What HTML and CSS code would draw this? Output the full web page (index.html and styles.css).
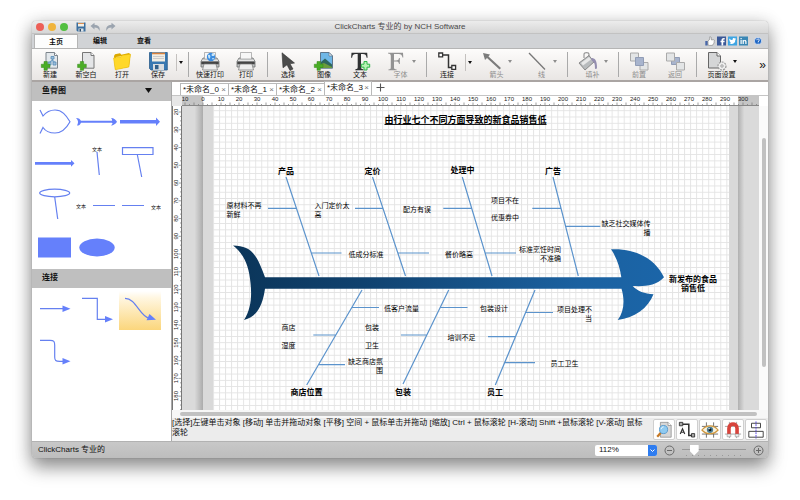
FILE: index.html
```html
<!DOCTYPE html>
<html lang="zh-CN">
<head>
<meta charset="utf-8">
<title>ClickCharts 专业的 by NCH Software</title>
<link rel="stylesheet" href="styles.css">
</head>
<body>
<div class="window">
  <header class="titlebar">
    <div class="title-tools">
      <button class="light red" aria-label="关闭"></button>
      <button class="light yellow" aria-label="最小化"></button>
      <button class="light green" aria-label="缩放"></button>
      <button class="quick" aria-label="保存"><svg width="10" height="10" viewBox="0 0 10 10"><path d="M.5.5h9v9h-8l-1-1z" fill="#3b6f9f"/><path d="M2 .5h6v4H2z" fill="#f4efe6"/><path d="M2 1.5h6" stroke="#d98d50"/><path d="M2.5 6.5h5v3h-5z" fill="#dde3e8"/><path d="M3.5 7h1.5v2.500H3.500z" fill="#2c4a68"/></svg></button>
      <button class="quick" aria-label="撤消"><svg width="11" height="10" viewBox="0 0 11 10"><path d="M.5 4 4.500.8v2C8.500 3 10.500 5.500 9.500 9 8.800 6.500 7 5.500 4.500 5.500v2z" fill="#9ba4af"/></svg></button>
      <button class="quick" aria-label="重做"><svg width="11" height="10" viewBox="0 0 11 10"><path d="M10.500 4 6.500.8v2C2.500 3 .5 5.500 1.500 9 2.200 6.500 4 5.500 6.500 5.500v2z" fill="#9ba4af"/></svg></button>
    </div>
    <h1 class="title">ClickCharts 专业的 by NCH Software</h1>
    <div></div>
  </header>

  <nav class="ribbon">
    <button class="ribbon-tab active">主页</button>
    <button class="ribbon-tab">编辑</button>
    <button class="ribbon-tab">查看</button>
    <div class="social">
      <a href="#" aria-label="赞"><svg width="10" height="10" viewBox="0 0 10 10"><path d="M.3 5h2.400v4.500H.3z" fill="#4867aa"/><path d="M3 5.200 4.800 3V.8c1.400-.3 1.800 1 1.400 3h2.600c1 .3.700 1.500.3 1.700.3.500.1 1.200-.3 1.400 0 .7-.2 1.100-.6 1.300 0 .8-.5 1.200-1.100 1.200H4.200L3 9z" fill="#fff" stroke="#777" stroke-width=".6"/></svg></a>
      <a href="#" aria-label="Facebook"><svg width="9" height="10" viewBox="0 0 9 10"><path d="M0 .5h9v9H0z" fill="#3b5998"/><path d="M4.500 9.500V6.200h-1V4.800h1C4.400 2.500 5.300 1.700 7.700 2v1.400C6.500 3.300 6.100 3.600 6.200 4.800h1.500l-.2 1.400H6.200v3.300z" fill="#fff"/></svg></a>
      <a href="#" aria-label="Twitter"><svg width="9" height="10" viewBox="0 0 9 10"><path d="M0 .5h9v9H0z" fill="#3ea5e3"/><path d="M1.300 2.500c1 1.100 2 1.500 3.200 1.600C4.300 2 6.200 1.600 7 2.600l1-.3-.6.9.7-.1-.8.8C7.400 7.500 4 8.800 1.200 7.300c.8 0 1.500-.1 2-.6-.7-.1-1.200-.5-1.300-1h.6c-.8-.3-1.100-.8-1.100-1.500l.5.100c-.6-.5-.9-1-.6-1.800" fill="#fff"/></svg></a>
      <a href="#" aria-label="LinkedIn"><svg width="9" height="10" viewBox="0 0 9 10"><path d="M0 .5h9v9H0z" fill="#3a87b5"/><path d="M1.500 4h1.200v4H1.500zM1.500 2h1.200v1.200H1.500zM3.600 4h1.200v.6C5.600 3.600 7.500 3.700 7.500 5.600V8H6.300V5.800c0-1-1.500-1-1.500 0V8H3.600z" fill="#fff"/></svg></a>
      <a href="#" class="help" aria-label="帮助"><svg width="8" height="10" viewBox="0 0 8 10"><circle cx="4" cy="5" r="3.600" fill="#1c65c4" stroke="#e9f0fa" stroke-width=".7"/><path d="M2.800 4.200c0-1.700 2.600-1.600 2.500-.1C5.300 5 4.100 5 4.100 6M4.100 6.600v.9" fill="none" stroke="#fff" stroke-width=".9"/></svg></a>
    </div>
  </nav>

  <div class="toolbar">
    <button class="tool"><svg class="icon" viewBox="0 0 24 19"><path d="M8 .5h8.500l3 3v12.700H8z" fill="#e3e8ec" stroke="#7d858c"/><path d="M16.500.5v3h3" fill="#fff" stroke="#7d858c"/><path d="M13 4.500h3v2.500h-3zM10 10h3v3h-3zM15 10h3v3h-3zM14.500 7v1.500M11.500 10l3-2 2 2" fill="#9dbfdb" stroke="#568bb5" stroke-width=".8"/><path class="plus" d="M6 9.500h3.300v2.700H12v3.300H9.300v2.800H6v-2.800H3.300v-3.300H6z"/></svg><span>新建</span></button>
    <button class="tool"><svg class="icon" viewBox="0 0 24 19"><path d="M8.500.5H17l3 3v12.700H8.500z" fill="#e4e5e7" stroke="#777"/><path d="M17 .5v3h3" fill="#fff" stroke="#777"/><path class="plus" d="M6.300 9.500h3.300v2.700h2.700v3.300H9.600v2.800H6.300v-2.800H3.600v-3.300h2.700z"/></svg><span>新空白</span></button>
    <button class="tool"><svg class="icon" viewBox="0 0 24 19"><path d="m4 4 1-1.800 5-1 1.500 1.500L19 1l1.500 1.500L19 15 5 17.500z" fill="#dba900"/><path d="m6 5 12-2 .5 10L5 16z" fill="#fff3a8"/><path d="m3.500 6 7-1 2-1.800 8-1L18.800 15 5.300 17.800z" fill="#ffd829" stroke="#e8b800" stroke-width=".5"/></svg><span>打开</span></button>
    <button class="tool"><svg class="icon" viewBox="0 0 24 19"><path d="M3.500.5h17.800v17.500H5l-1.500-1.500z" fill="#3978b1" stroke="#2b5d8b" stroke-width=".8"/><path d="M6 .8h13v8.700H6z" fill="#f2eee3"/><path d="M6 .8h13v1.500H6z" fill="#d9823d"/><path d="M7 4.500h11M7 6.500h11" stroke="#ccc"/><path d="M7 12h11v6H7z" fill="#d9dde0"/><path d="M9 13h3.500v4.200H9z" fill="#315f89"/></svg><span>保存</span></button>
    <button class="drop split" aria-label="保存选项"><i class="caret"></i></button>
    <span class="sep"></span>
    <button class="tool"><svg class="icon" viewBox="0 0 24 19"><use href="#printer"/><circle cx="13" cy="5" r="4.200" fill="#3c8de0"/><path d="M10 3c2-1 3 1 2 3s-2-1-2-3m5-2c2 1 2 3 0 3s-2-2 0-3m-1 5 2 0-1 2z" fill="#c9e5f7"/></svg><span>快速打印</span></button>
    <button class="tool"><svg class="icon" viewBox="0 0 24 19"><g id="printer"><path d="M5 6h14l2 3.500V15H3V9.500z" fill="#c1c3c4" stroke="#6c6e70" stroke-width=".8"/><path d="M6.500 7V.5h11V7z" fill="#f7f7f7" stroke="#999" stroke-width=".7"/><path d="M3.300 9.500h17.400v2.800H3.300z" fill="#444"/><path d="M6 12h12l1.500 6H4.500z" fill="#ededed" stroke="#777" stroke-width=".7"/><path d="M4 8.300h16" stroke="#eee"/></g></svg><span>打印</span></button>
    <span class="sep"></span>
    <button class="tool"><svg class="icon" viewBox="0 0 24 19"><path d="M6 .8 18.500 11l-4.500.8L17 17l-3 1.500-3-5.700-4 3z" fill="#4c4c4c" stroke="#333" stroke-width=".6"/></svg><span>选择</span></button>
    <button class="tool"><svg class="icon" viewBox="0 0 24 19"><path d="M8.500.5h8.500l3.500 3.500v12.200h-12z" fill="#6fb7e6" stroke="#60768a"/><path d="M17 .5V4h3.500z" fill="#eef3f7" stroke="#60768a" stroke-width=".7"/><path d="m9 10 4-3.500 7 6V16H9z" fill="#2e665d"/><path d="m9 12 3-1 8 4v1H9z" fill="#6b9c3c"/><path class="plus" d="M5 9.500h3.300v2.700H11v3.300H8.300v2.800H5v-2.800H2.300v-3.300H5z"/></svg><span>图像</span></button>
    <button class="tool"><svg class="icon" viewBox="0 0 24 19"><path d="M3.500.7h15.700l.4 5h-1c-.5-2.800-1.300-3.600-3.800-3.600H13v13c0 1.800.5 2.100 2.500 2.300v.8H7.200v-.8c2-.2 2.500-.5 2.500-2.300v-13H7.900c-2.500 0-3.300.8-3.800 3.600h-1z" fill="#303233"/><path d="M16 9.500h3v2.700h2.700v3H19V18h-3v-2.800h-2.700v-3H16z" fill="#b8f3b5" stroke="#2eb447"/></svg><span>文本</span></button>
    <button class="tool menu disabled" disabled><svg class="icon" viewBox="0 0 24 19"><path d="M4 .7h15l.3 4.800h-.8c-.5-2.600-1.500-3.600-4-3.600H10v6.500h2c2 0 2.700-.5 3-2.400h.8v6H15c-.3-1.900-1-2.500-3-2.500h-2v5.700c0 1.800.6 2.100 2.600 2.300v.8H4.400v-.8c2-.2 2.400-.5 2.400-2.300v-11c0-1.800-.6-2.400-2.800-2.600z" fill="#929292"/></svg><i class="caret"></i><span>字体</span></button>
    <span class="sep"></span>
    <button class="tool"><svg class="icon" viewBox="0 0 24 19"><path d="M7 3h6.500v12.500H17" fill="none" stroke="#333" stroke-width="1.500"/><path d="M3.800 1h3.800v3.800H3.800zM16.800 13.500h3.800v3.800h-3.800z" fill="#fff" stroke="#333" stroke-width="1.300"/></svg><span>连接</span></button>
    <button class="drop split" aria-label="连接选项"><i class="caret"></i></button>
    <button class="tool menu disabled" disabled><svg class="icon" viewBox="0 0 24 19"><path d="m3 1 7 1.500L8.500 4.500 21 16l-1.500 1.500L7 6 5 8z" fill="#7c7c7c"/></svg><i class="caret"></i><span>箭头</span></button>
    <button class="tool menu disabled" disabled><svg class="icon" viewBox="0 0 24 19"><path d="m4 1 16 16.500" stroke="#777" stroke-width="1.300"/></svg><i class="caret"></i><span>线</span></button>
    <span class="sep"></span>
    <button class="tool menu disabled" disabled><svg class="icon" viewBox="0 0 24 19"><path d="M8 6V2.500c0-2.500 5-2.500 5 0V8" fill="none" stroke="#999" stroke-width="1.200"/><path d="m3 11 10-7.500L18 10 9 18z" fill="#b8bbbd" stroke="#777" stroke-width=".8"/><path d="m5 11 8-6 2 2.500-8 6z" fill="#e8e8e8"/><path d="M15 6c4 0 6 2 6 10.500l-2 .5c0-5-.5-7-3-8z" fill="#948eaf"/></svg><i class="caret"></i><span>填补</span></button>
    <span class="sep"></span>
    <button class="tool disabled" disabled><svg class="icon" viewBox="0 0 24 19"><path d="M3.500 1h8v8h-8zM13 10.500h8v7.500h-8z" fill="#e3e5e6" stroke="#aaa"/><path d="M8.500 5.500h8v8h-8z" fill="#a8b4cd" stroke="#919db6"/></svg><span>前置</span></button>
    <button class="tool disabled" disabled><svg class="icon" viewBox="0 0 24 19"><path d="M8.500 5.500h8v7h-8z" fill="#a8b4cd" stroke="#919db6"/><path d="M3.500 1h8v8h-8zM13.500 10.500h8v7.500h-8z" fill="#e3e5e6" stroke="#aaa"/></svg><span>返回</span></button>
    <span class="sep"></span>
    <button class="tool menu"><svg class="icon" viewBox="0 0 24 19"><path d="M3.500.5H12l3.500 3.500v12h-12z" fill="#d5d6d7" stroke="#666"/><path d="M12 .5V4h3.500" fill="#fff" stroke="#666"/><circle cx="17" cy="14" r="4" fill="#eee" stroke="#999" stroke-width="1.200" stroke-dasharray="2 1"/><circle cx="17" cy="14" r="1.200" fill="#fff" stroke="#888" stroke-width=".8"/></svg><i class="caret"></i><span>页面设置</span></button>
    <button class="more" aria-label="更多">»</button>
  </div>

  <div class="workspace">
    <aside class="sidebar">
      <button class="side-head">鱼骨图 <i class="caret big"></i></button>
      <div class="palette shapes">
        <button class="shape" aria-label="鱼头"><svg viewBox="0 0 42 42"><path class="ln" d="M7 9l3 6C14 10 18 9 22 9c7 0 11 5 15 11.700C33 28 29 32 22 32c-5 0-9-1-12-5.500l-3 6"/></svg></button>
        <button class="shape" aria-label="鱼骨"><svg viewBox="0 0 42 42"><path class="fl" d="M4 19.700h32v2H4zM0 17c3 0 4 1 5.500 3.700C4 24 3 24.500 1 24.500c1.500-3 1.500-5-1-7.500M35 17c3 0 5 2 6 3.700-1 2-4 4-6 3.800 1-1 1.500-1.800 1.500-2.300L34 20.700l2-.7c.3-1 0-2-1-3"/></svg></button>
        <button class="shape" aria-label="粗箭头"><svg viewBox="0 0 42 42"><path class="fl" d="M1 19h36v-2.500l4 4.200-4 4.300v-2.500H1z"/></svg></button>
        <button class="shape" aria-label="箭头"><svg viewBox="0 0 42 42"><path class="fl" d="M2 19h36v-2l3.500 3.300L38 23.700v-2H2z"/></svg></button>
        <button class="shape" aria-label="上方文本线"><svg viewBox="0 0 42 42"><text x="21" y="8" text-anchor="middle">文本</text><path class="ln" d="m21 9 2.300 23"/></svg></button>
        <button class="shape" aria-label="矩形线"><svg viewBox="0 0 42 42"><path class="ln" d="M3.500 4.700H34v6.800H3.500zM18.300 11.500 22.700 34"/></svg></button>
        <button class="shape" aria-label="椭圆线"><svg viewBox="0 0 42 42"><ellipse class="ln" cx="21.700" cy="8" rx="15" ry="3.800"/><path class="ln" d="m21.700 12 3 22"/></svg></button>
        <button class="shape" aria-label="左侧文本线"><svg viewBox="0 0 42 42"><text x="0" y="23">文本</text><path class="ln" d="M17 20.500h22"/></svg></button>
        <button class="shape" aria-label="右侧文本线"><svg viewBox="0 0 42 42"><path class="ln" d="M3 20.500h22"/><text x="32" y="24">文本</text></svg></button>
        <button class="shape" aria-label="矩形"><svg viewBox="0 0 42 42"><path class="fl" d="M5 10.500h33v20H5z"/></svg></button>
        <button class="shape" aria-label="椭圆"><svg viewBox="0 0 42 42"><ellipse class="fl" cx="21" cy="20.500" rx="17.700" ry="9"/></svg></button>
      </div>
      <h2 class="side-head">连接</h2>
      <div class="palette">
        <button class="shape" aria-label="直线连接"><svg viewBox="0 0 42 42"><path class="ln" d="M7 20.700h24"/><path class="fl" d="m29.500 17.500 8 3.200-8 3.300z"/></svg></button>
        <button class="shape" aria-label="折线连接"><svg viewBox="0 0 42 42"><path class="ln" d="M6 10.300h15.300v21H31"/><path class="fl" d="m29 28 8 3.300-8 3.200z"/></svg></button>
        <button class="shape selected" aria-label="曲线连接"><svg viewBox="0 0 42 42"><path class="ln" d="M6 10.300c11 0 14 17 24 20"/><path class="fl" d="m30.500 26 6.500 5.700-9.500.5z"/></svg></button>
        <button class="shape" aria-label="圆角连接"><svg viewBox="0 0 42 42"><path class="ln" d="M7 10.300h10c4 0 4.700 1 4.700 5V27c0 3.500 1 4.300 5 4.300H31"/><path class="fl" d="m29.500 28 8 3.300-8 3.200z"/></svg></button>
      </div>
    </aside>

    <main class="editor">
      <div class="doc-tabs">
        <button class="doc-tab">*未命名_0<b>×</b></button>
        <button class="doc-tab">*未命名_1<b>×</b></button>
        <button class="doc-tab">*未命名_2<b>×</b></button>
        <button class="doc-tab active">*未命名_3<b>×</b></button>
        <button class="doc-add" aria-label="新标签"><svg width="9" height="9" viewBox="0 0 9 9"><path d="M4.500.5v8M.5 4.500h8" stroke="#555" stroke-width="1.100"/></svg></button>
      </div>
      <div class="stage">
        <div class="corner"></div>
        <svg class="ruler-x" id="ruler-x" height="10"></svg>
        <div class="track-top"></div>
        <svg class="ruler-y" id="ruler-y" width="10"></svg>
        <div class="canvas">
          <svg class="diagram" width="577" height="304" viewBox="182 106 577 304">
            <defs>
              <pattern id="grid" x="213" y="104" width="6.040" height="6.270" patternUnits="userSpaceOnUse"><path d="M.5 0v6.270M0 .5h6.040" stroke="#e3e3e3" stroke-width=".9"/></pattern>
              <linearGradient id="shadowL"><stop offset=".6" stop-color="#dadada"/><stop offset="1" stop-color="#ababab"/></linearGradient>
              <linearGradient id="shadowR"><stop offset="0" stop-color="#b0b0b0"/><stop offset=".3" stop-color="#dadada"/></linearGradient>
              <linearGradient id="bone"><stop offset="0" stop-color="#0b3559"/><stop offset=".3" stop-color="#10426f"/><stop offset=".8" stop-color="#1b61a0"/><stop offset="1" stop-color="#1b65a8"/></linearGradient>
            </defs>
            <path d="M182 106h21v304h-21z" fill="url(#shadowL)"/>
            <path d="M203 106h10v304h-10zM729 106h9v304h-9z" fill="#d9d9d9"/>
            <path d="M738 106h21v304h-21z" fill="url(#shadowR)"/>
            <path d="M213 106h516v304H213z" fill="#fff"/>
            <path d="M213 106h516v304H213z" fill="url(#grid)"/>
            <path class="bones" d="M286 177l33 99M372.500 177l33 99M462.300 177l29.700 99M553 177l25.300 99M362 290l-55.300 95M448.700 290 403 384M535 290l-39.700 95M268 208.300h29M355 208.300h28M443.300 208.300H472M532.300 208.300H561M565.300 226.300h35M311.500 253h30M398 253h31M485 253h31M351.500 307.500H379M440 307.500h27.500M525 312.500h28M313.300 335h22.400M401 335h26M488 336.700h28M505 362.700h30M318.500 364.700H345"/>
            <path d="M233 245.500C250 246 256 252 265 277.300H621.300C620 268 617 258 611 249.300 634 248 655 258 664 277.300 656 286 645 286.500 632.700 286 637 291 645 294 653.500 294.300 648 308 635 318 617.700 320 624 312 625 300 621.500 288.700H265C263 303 258 317 244 320 251 309 252 296 250.500 283 249 265 243 253 233 245.500z" fill="url(#bone)"/>
            <g class="title-text"><text x="465.500" y="123">由行业七个不同方面导致的新食品销售低</text></g>
            <g class="heads">
              <text x="286" y="174">产品</text><text x="372.500" y="174">定价</text><text x="462.500" y="173">处理中</text><text x="553" y="174">广告</text>
              <text x="306.500" y="394.500">商店位置</text><text x="403" y="394.500">包装</text><text x="495" y="394.500">员工</text>
              <text x="693" y="281.500">新发布的食品<tspan x="693" dy="9">销售低</tspan></text>
            </g>
            <g class="notes">
              <text x="226.500" y="207.500">原材料不再<tspan x="226.500" dy="9">新鲜</tspan></text>
              <text x="314.500" y="207.500">入门定价太<tspan x="314.500" dy="9">高</tspan></text>
              <text x="403" y="211.500">配方有误</text>
              <text x="491" y="202.500">项目不在<tspan x="491" dy="17">优惠券中</tspan></text>
              <text x="348.500" y="256.500">低成分标准</text><text x="445" y="256.500">餐价略高</text>
              <text x="384" y="310.500">低客户流量</text><text x="480" y="310.500">包装设计</text>
              <text x="281.500" y="329.500">商店<tspan x="281.500" dy="18">湿度</tspan></text>
              <text x="365" y="329.500">包装<tspan x="365" dy="18">卫生</tspan></text>
              <text x="447.500" y="340">培训不足</text><text x="550.500" y="366">员工卫生</text>
            </g>
            <g class="notes end">
              <text x="650.500" y="225.500">缺乏社交媒体传<tspan x="650.500" dy="9">播</tspan></text>
              <text x="561" y="252">标准烹饪时间<tspan x="561" dy="9">不准确</tspan></text>
              <text x="592" y="311.500">项目处理不<tspan x="592" dy="9">当</tspan></text>
              <text x="383" y="363.500">缺乏商店氛<tspan x="383" dy="9">围</tspan></text>
            </g>
          </svg>
        </div>
        <div class="track-y"><div class="thumb-y"></div></div>
        <div class="track-x"><div class="thumb-x"></div></div>
      </div>
      <div class="hint-bar">
        <p class="hint">[选择]左键单击对象 [移动] 单击并拖动对象 [平移] 空间 + 鼠标单击并拖动 [缩放] Ctrl + 鼠标滚轮 [H-滚动] Shift +鼠标滚轮 [V-滚动] 鼠标滚轮</p>
        <div class="view-tools">
          <button aria-label="预览"><svg viewBox="0 0 20 20"><path d="M6 1.500h8.500L18 5v13H6z" fill="#d6d6d6" stroke="#888" stroke-width=".8"/><path d="M14.500 1.500V5H18" fill="#fff" stroke="#888" stroke-width=".8"/><path d="m6.500 13-4 4.500" stroke="#c57825" stroke-width="2.500"/><circle cx="9.500" cy="9.500" r="4.500" fill="#8fcaf0" stroke="#5296cb"/><path d="M7 9c0-1.500 1-2.300 2.500-2.500" stroke="#fff" fill="none"/></svg></button>
          <button aria-label="自动连接"><svg viewBox="0 0 20 20"><path d="M4 3.500h8V16h3.500" fill="none" stroke="#333" stroke-width="1.700"/><path d="M1.500 1.500h3.800v3.800H1.500zM15 14h3.500v3.800H15z" fill="#aaa" stroke="#333"/><path d="m2.500 14.500 2.500-6 2.500 6M3.500 12.500h3" fill="none" stroke="#333" stroke-width="1.300"/></svg></button>
          <button aria-label="显示网格"><svg viewBox="0 0 20 20"><path d="M6 1.500v17M14 1.500v17M1 6h18M1 14.500h18" stroke="#666"/><path d="M1 10c5-6 13-6 18 0-5 5.500-13 5.500-18 0z" fill="#f8f2df" stroke="#cf963b" stroke-width="1.300"/><circle cx="10" cy="9.800" r="3.500" fill="#4c7f94"/><circle cx="10" cy="9.800" r="1.600" fill="#111"/><circle cx="9" cy="8.500" r=".8" fill="#fff"/></svg></button>
          <button aria-label="对齐网格"><svg viewBox="0 0 20 20"><path d="M1 6h18M1 14.500h18M6 1v18M14 1v18" stroke="#888" stroke-width=".8"/><path d="M5.500 14.500V8c0-6 9-6 9 0v6.500" fill="none" stroke="#d8443c" stroke-width="4"/><path d="M3.500 14.500h4v3h-4zM12.500 14.500h4v3h-4z" fill="#eee" stroke="#888" stroke-width=".6"/></svg></button>
          <button aria-label="对齐参考线"><svg viewBox="0 0 20 20"><path d="M5 2.500h10v5H5zM2 11.500h16V18H2z" fill="#fff" stroke="#333"/><path d="M10 .5v19" stroke="#4b37e0" stroke-dasharray="2 1"/></svg></button>
        </div>
      </div>
    </main>
  </div>

  <footer class="statusbar">
    <span class="status-name">ClickCharts 专业的</span>
    <div class="zoom">
      <label class="zoom-select"><select aria-label="缩放比例"><option>112%</option></select><svg viewBox="0 0 9 11"><path d="m2.500 4.500 2 2 2-2" fill="none" stroke="#fff"/></svg></label>
      <button class="round" aria-label="缩小"><svg viewBox="0 0 11 11"><circle cx="5.500" cy="5.500" r="4.500"/><path d="M3 5.500h5"/></svg></button>
      <input class="slider" type="range" min="0" max="100" value="14" aria-label="缩放">
      <button class="round" aria-label="放大"><svg viewBox="0 0 11 11"><circle cx="5.500" cy="5.500" r="4.500"/><path d="M3 5.500h5M5.500 3v5"/></svg></button>
    </div>
  </footer>
</div>
<script src="rulers.js"></script>
</body>
</html>
```

FILE: styles.css
```css
* { box-sizing: border-box; }

body {
  margin: 0;
  min-height: 100vh;
  display: flex;
  background: #fff;
  color: #111;
  font: 8px/10px "Liberation Sans", "Noto Sans CJK SC", sans-serif;
}

button, select, input { font: inherit; color: inherit; margin: 0; }
button { padding: 0; border: 0; background: none; }
h1, h2, p { margin: 0; font: inherit; }
svg { display: block; }

.window {
  flex: 1;
  min-width: 0;
  margin: 21px 32px 42px;
  display: flex;
  flex-direction: column;
  border-radius: 4px;
  overflow: hidden;
  background: #ececec;
  box-shadow: 0 10px 18px rgba(0, 0, 0, .36), 0 2px 18px rgba(0, 0, 0, .2), 0 0 1px rgba(0, 0, 0, .4);
}

/* Title bar */
.titlebar {
  height: 13px;
  display: grid;
  grid-template-columns: 1fr auto 1fr;
  align-items: center;
  background: linear-gradient(#ececec, #d6d6d6);
  border-bottom: 1px solid #c2c2c2;
}
.title-tools { display: flex; align-items: center; gap: 4px; padding-left: 4px; }
.light { width: 8px; height: 8px; border-radius: 50%; }
.red { background: #ed5f57; }
.yellow { background: #f0b43c; }
.green { background: #52bf40; }
.light + .quick { margin-left: 4px; }
.title { color: #484848; }

/* Ribbon */
.ribbon {
  height: 15px;
  display: flex;
  align-items: flex-end;
  padding-left: 2px;
  background: #d1d3d6;
  border-bottom: 1px solid #b5b5b5;
}
.ribbon-tab { width: 44px; height: 14px; font-size: 7px; font-weight: bold; }
.ribbon-tab.active { background: #fdfdfd; border: 1px solid #b5b5b5; border-bottom: 0; }
.social { display: flex; gap: 2px; margin: 0 6px 2px auto; }
.social .help { margin-left: 4px; }

/* Toolbar */
.toolbar {
  height: 33px;
  display: flex;
  align-items: stretch;
  background: linear-gradient(#fdfcfb, #e9e6e4);
  border-bottom: 2px solid #aaa5a3;
}
.tool {
  width: 36px;
  flex: none;
  display: grid;
  grid-template-columns: 36px;
  grid-template-rows: 19px 8px;
  align-content: start;
  justify-items: center;
  padding-top: 3px;
  font-size: 7px;
  line-height: 8px;
}
.tool.menu { width: 45px; grid-template-columns: 36px 9px; }
.tool.menu span { grid-column: 1 / 3; }
.tool.menu .caret { align-self: center; margin-right: 9px; }
.tool.disabled { color: #8d8d8d; }
.tool span { white-space: nowrap; }
.icon { width: 24px; height: 19px; }
.plus { fill: #4aad25; stroke: #308615; stroke-width: .5; }
.caret {
  width: 4px;
  height: 3px;
  background: currentColor;
  clip-path: polygon(0 0, 100% 0, 50% 100%);
}
.caret.big { width: 7px; height: 5px; }
.drop { width: 9px; flex: none; display: grid; place-items: center; }
.split { height: 17px; margin-top: 5px; border-left: 1px solid #c4c1bf; }
.sep { width: 6px; flex: none; margin: 3px 0; background: linear-gradient(#aaa, #aaa) center / 1px 100% no-repeat; }
.sep:first-of-type { width: 7px; }
.more { margin: 0 2px 0 auto; font-size: 12px; }

/* Workspace */
.workspace { flex: 1; min-height: 0; display: flex; }
.sidebar {
  width: 140px;
  flex: none;
  background: #fff;
  border-right: 1px solid #a9a9a9;
}
.side-head {
  width: 100%;
  height: 19px;
  display: flex;
  align-items: center;
  justify-content: space-between;
  padding: 0 19px 2px 10px;
  background: #bfbfbf;
  font-weight: bold;
}
.palette { display: grid; grid-template-columns: repeat(3, 42px); column-gap: 1px; padding-left: 1px; }
.shape { height: 42px; }
.shape svg { width: 42px; height: 42px; }
.shape.selected { background: linear-gradient(#fff 3px, #fff6e0 10px, #fbd67c); }
.shape text { font-size: 5px; fill: #111; }
.ln { fill: none; stroke: #6580f0; stroke-width: 1.2; }
.fl { fill: #6580fb; }

/* Editor */
.editor { flex: 1; min-width: 0; display: flex; flex-direction: column; }
.doc-tabs {
  height: 14px;
  flex: none;
  display: flex;
  align-items: flex-end;
  padding-left: 8px;
  background: #fff;
  border-bottom: 1px solid #c5c5c5;
}
.doc-tab {
  width: 48px;
  height: 12px;
  display: flex;
  justify-content: space-between;
  align-items: center;
  padding: 0 2px;
  border: 1px solid #b9b9b9;
  border-width: 1px 0 0 1px;
  white-space: nowrap;
}
.doc-tab b { font-weight: normal; color: #777; }
.doc-tab.active { height: 14px; padding-bottom: 2px; border-right-width: 1px; background: #fff; }
.doc-add { padding: 0 4px 3px; }

.stage {
  flex: 1;
  min-height: 0;
  display: grid;
  grid-template-columns: 10px minmax(0, 1fr) 9px;
  grid-template-rows: 10px minmax(0, 1fr) 8px;
}
.corner { background: #e7e7e7; }
.ruler-x { width: 100%; background: #fff; border-bottom: 1px solid #888; }
.ruler-y { height: 100%; background: #fff; border-right: 1px solid #777; border-left: 1px solid #777; }
.ruler-x text, .ruler-y text { font-size: 6px; fill: #222; text-anchor: middle; }
.ruler-x path, .ruler-y path { stroke: #777; stroke-width: .7; }
.ruler-x .outside { fill: #c5c5c5; }
.track-top { background: #fff; }
.canvas { overflow: hidden; background: #dadada; }
.track-y { padding: 32px 2px 43px 3px; background: #fafafa; }
.thumb-y { height: 100%; border-radius: 2px; background: #c1c1c1; }
.track-x { grid-column: 1 / 4; padding: 2px 11px 2px 8px; background: #f7f7f7; }
.thumb-x { height: 4px; border-radius: 2px; background: #c1c1c1; }

.bones { fill: none; stroke: #5b93cc; stroke-width: 1.2; }
.title-text, .heads { font-size: 8px; font-weight: bold; text-anchor: middle; }
.title-text { font-size: 9px; text-decoration: underline; }
.notes { font-size: 7px; }
.notes.end { text-anchor: end; }

.hint-bar { height: 23px; flex: none; display: flex; justify-content: space-between; background: #ececec; }
.hint { flex: 0 1 474px; }
.view-tools { display: flex; gap: 1px; padding: 1px 1px 1px 0; }
.view-tools button { width: 22px; padding: 0 1px; background: #fff; border: 1px solid #cfcfcf; border-radius: 2px; }

/* Status bar */
.statusbar {
  height: 17px;
  flex: none;
  display: flex;
  justify-content: space-between;
  align-items: center;
  padding: 0 4px 0 6px;
  background: linear-gradient(#c8c8c8, #bdbdbd);
  border-top: 1px solid #b2b2b2;
}
.zoom { display: flex; align-items: center; gap: 7px; }
.zoom-select { display: grid; grid-template-columns: 53px 9px; height: 11px; }
.zoom-select > * { grid-row: 1; }
.zoom-select select {
  grid-column: 1 / 3;
  appearance: none;
  padding: 0 4px;
  border: 0;
  border-radius: 2px;
  background: #fff;
}
.zoom-select svg { grid-column: 2; z-index: 1; background: #2f7df0; border-radius: 0 2px 2px 0; pointer-events: none; }
.round svg { width: 11px; height: 11px; fill: none; stroke: #6a6a6a; }
.slider {
  appearance: none;
  width: 64px;
  height: 12px;
  background:
    linear-gradient(#999, #999) 0 5px / 100% 1px no-repeat,
    repeating-linear-gradient(90deg, #999 0 1px, transparent 1px 6px) 4px 11px / 58px 1px no-repeat;
}
.slider::-webkit-slider-thumb {
  appearance: none;
  width: 9px;
  height: 11px;
  background: #fff;
  clip-path: polygon(10% 0, 90% 0, 100% 10%, 100% 60%, 50% 100%, 0 60%, 0 10%);
}
```

FILE: rulers.js
```js
const NS = "http://www.w3.org/2000/svg";

function add(parent, tag, attrs, text) {
  const node = document.createElementNS(NS, tag);
  for (const key in attrs) node.setAttribute(key, attrs[key]);
  if (text !== undefined) node.textContent = text;
  parent.append(node);
}

// Millimetre scale: one label every ten units.
const rx = document.getElementById("ruler-x");
add(rx, "rect", { class: "outside", x: 0, y: 0, width: 21, height: 10 });
add(rx, "rect", { class: "outside", x: 556, y: 0, width: 21, height: 10 });
let ticks = "";
for (let i = -4; i <= 124; i++) {
  ticks += `M${21 + i * 4.5} 10v${i % 2 ? -2 : -3.5}`;
}
add(rx, "path", { d: ticks });
for (let n = -10; n <= 300; n += 10) {
  add(rx, "text", { x: 21 + n * 1.8, y: 5 }, Math.abs(n));
}

const ry = document.getElementById("ruler-y");
ticks = "";
for (let i = 0; i < 68; i++) {
  ticks += `M9 ${6 + i * 4.44}h${i % 4 ? -2 : -3.5}`;
}
add(ry, "path", { d: ticks });
for (let n = 20; n <= 180; n += 10) {
  const y = 6 + (n - 20) * 1.775;
  add(ry, "text", { x: 0, y: 0, transform: `translate(5 ${y}) rotate(-90)` }, n);
}
```
